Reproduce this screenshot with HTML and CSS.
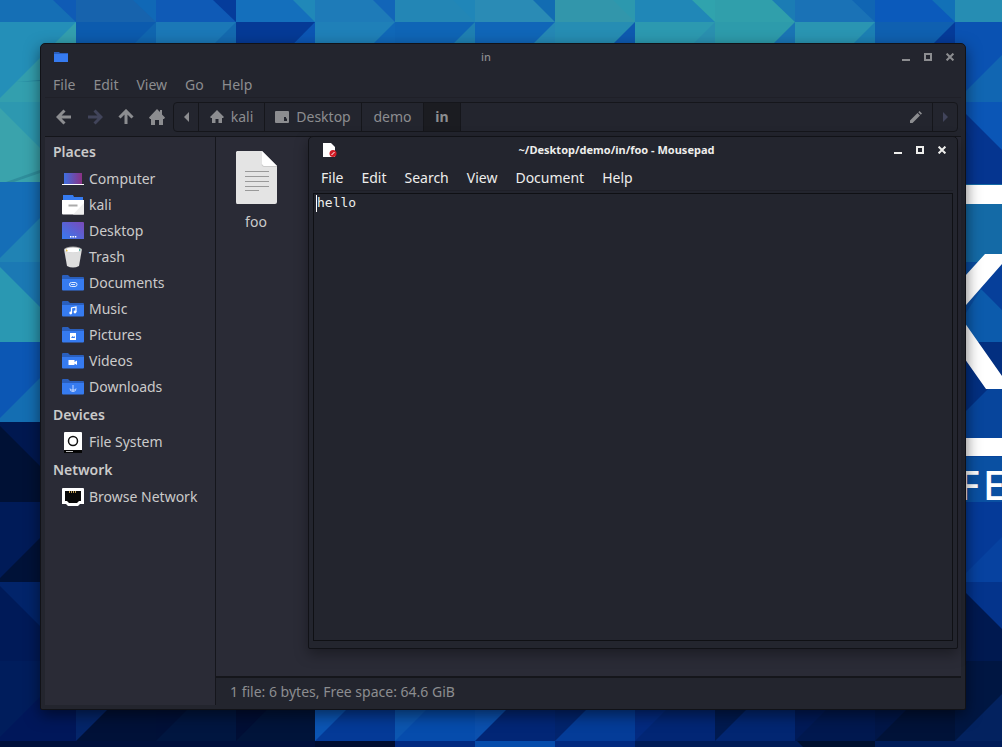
FILE: index.html
```
<!DOCTYPE html>
<html lang="en">
<head>
<meta charset="utf-8">
<title>Desktop</title>
<link rel="stylesheet" href="styles.css">
</head>
<body>
<svg width="0" height="0" class="defs" aria-hidden="true">
  <defs>
    <linearGradient id="screen" x1="0" y1="0" x2="1" y2="0"><stop offset="0" stop-color="#3f6fe0"/><stop offset="1" stop-color="#8c3184"/></linearGradient>
    <linearGradient id="desk" x1="0" y1="1" x2="1" y2="0"><stop offset="0" stop-color="#367bf0"/><stop offset="1" stop-color="#7b49b8"/></linearGradient>
    <symbol id="folder" viewBox="0 0 22 22"><path d="M0 4q0-1 1-1h5l2 2h13q1 0 1 1v5H0z" fill="#2a5fbd"/><path d="M0 7h22v10.500q0 1-1 1H1q-1 0-1-1z" fill="#367bf0"/></symbol>
    <symbol id="minimize" viewBox="0 0 8 8"><path d="M0 6h8v2H0z" fill="currentColor"/></symbol>
    <symbol id="maximize" viewBox="0 0 8 8"><path d="M1 1h6v6H1z" fill="none" stroke="currentColor" stroke-width="2"/></symbol>
    <symbol id="close" viewBox="0 0 8 8"><path d="M.6.6l6.800 6.800M7.400.6L.6 7.400" stroke="currentColor" stroke-width="2"/></symbol>
  </defs>
</svg>

<svg class="wallpaper" viewBox="0 0 1002 747" preserveAspectRatio="xMidYMid slice" aria-hidden="true">
  <rect width="1002" height="747" fill="#001d5c"/>
  <!-- top row -->
  <path fill="#156fb5" d="M0 0h76v22H0z"/><path fill="#0f5bb5" d="M53 0h23v22z"/>
  <path fill="#1763ad" d="M76 0h80v22H76z"/><path fill="#1068b6" d="M133 0h23v22z"/>
  <path fill="#0f5ab6" d="M156 0h80v22h-80z"/><path fill="#053c9b" d="M213 0h23v22z"/>
  <path fill="#146fbc" d="M236 0h79v22h-79z"/><path fill="#2088b8" d="M293 0h22v22z"/>
  <path fill="#1e7bb8" d="M315 0h80v22h-80z"/><path fill="#1265b8" d="M373 0h22v22z"/>
  <path fill="#2386b5" d="M395 0h80v22h-80z"/><path fill="#2086b8" d="M453 0h22v22z"/>
  <path fill="#2a8bb5" d="M475 0h80v22h-80z"/><path fill="#126cb2" d="M533 0h22v22z"/>
  <path fill="#3296ab" d="M555 0h80v22h-80z"/><path fill="#2c98ae" d="M613 0h22v22z"/>
  <path fill="#2087b7" d="M635 0h80v22h-80z"/><path fill="#30a3ad" d="M692 0h23v22z"/>
  <path fill="#309fab" d="M715 0h80v22h-80z"/><path fill="#1b7cb4" d="M772 0h23v22z"/>
  <path fill="#1a72b6" d="M795 0h80v22h-80z"/><path fill="#1065b3" d="M852 0h23v22z"/>
  <path fill="#0b5abb" d="M875 0h80v22h-80z"/><path fill="#1271b7" d="M932 0h23v22z"/>
  <path fill="#268db3" d="M955 0h47v22h-47z"/>
  <!-- second row -->
  <path fill="#248fb8" d="M0 22h76v80H0z"/><path fill="#339fae" d="M76 22v80H0v-4z"/>
  <path fill="#0c5bae" d="M76 22h80v80H76z"/><path fill="#1066b0" d="M156 22v80H76z"/>
  <path fill="#1b78b7" d="M156 22h80v80h-80z"/><path fill="#146ab0" d="M236 22v80h-80z"/>
  <path fill="#053a96" d="M236 22h79v80h-79z"/><path fill="#0c56b4" d="M315 22v80h-79z"/>
  <path fill="#1f80b8" d="M315 22h80v80h-80z"/><path fill="#1068b8" d="M395 22v80h-80z"/>
  <path fill="#0f65b6" d="M395 22h80v80h-80z"/><path fill="#1f80b2" d="M475 22v80h-80z"/>
  <path fill="#1066b8" d="M475 22h80v80h-80z"/><path fill="#2588b5" d="M555 22v80h-80z"/>
  <path fill="#268db3" d="M555 22h80v80h-80z"/><path fill="#0e5ab0" d="M635 22v80h-80z"/>
  <path fill="#2c99b0" d="M635 22h80v80h-80z"/><path fill="#2a90b0" d="M715 22v80h-80z"/>
  <path fill="#2d9bab" d="M715 22h80v80h-80z"/><path fill="#1a75b5" d="M795 22v80h-80z"/>
  <path fill="#2a95b2" d="M795 22h80v80h-80z"/><path fill="#1c80b4" d="M875 22v80h-80z"/>
  <path fill="#0f60b0" d="M875 22h80v80h-80z"/><path fill="#053b9a" d="M955 22v80h-80z"/>
  <path fill="#0a52b2" d="M955 22h47v80h-47z"/><path fill="#1166b2" d="M1002 55v47h-47z"/>
  <!-- left column -->
  <path fill="#2d98b0" d="M0 102h76v80H0z"/><path fill="#3aa3ac" d="M0 108l74 74H0z"/><path fill="#2f8e9c" d="M6 182l34-12v3l-26 9z"/><path fill="#2586a0" d="M16 82l24-2v1z"/>
  <path fill="#156eb7" d="M0 182h76v80H0z"/><path fill="#2083b4" d="M0 258l76-76v80H0z"/>
  <path fill="#1b79b4" d="M0 262h76v80H0z"/><path fill="#2a98b2" d="M0 267l75 75H0z"/>
  <path fill="#0c57b4" d="M0 342h76v80H0z"/><path fill="#146eb2" d="M0 418l76-76v80H0z"/>
  <path fill="#001850" d="M0 422h76v80H0z"/><path fill="#001135" d="M0 426l76 76H0z"/>
  <path fill="#001b58" d="M0 502h76v80H0z"/><path fill="#001238" d="M0 578l76-76v80H0z"/>
  <path fill="#02246a" d="M0 582h76v79H0z"/><path fill="#001a58" d="M0 586l75 75H0z"/>
  <path fill="#001d5c" d="M0 661h76v80H0z"/><path fill="#00175a" d="M0 737l76-76v80H0z"/>
  <!-- right column -->
  <path fill="#0b56b6" d="M955 102h47v82h-47z"/><path fill="#053590" d="M955 103l47 47v34h-47z"/>
  <path fill="#146aa6" d="M955 184h47v78h-47z"/><path fill="#0a4da0" d="M955 262h47v80h-47z"/>
  <path fill="#0c5bac" d="M955 330l27-42 20 22v32h-47z"/><path fill="#063f9a" d="M980 288l22-24v46z"/>
  <path fill="#032f80" d="M955 342h47v80h-47z"/><path fill="#07459c" d="M955 422l47-47v127h-47z"/>
  <path fill="#0a50a2" d="M955 457h47v45h-47z"/>
  <path fill="#053a98" d="M955 502h47v80h-47z"/><path fill="#0742a0" d="M1002 537v45h-45z"/>
  <path fill="#04348c" d="M955 582h47v79h-47z"/><path fill="#001950" d="M955 582l47 47v32h-47z"/>
  <path fill="#001642" d="M955 661h47v80h-47z"/><path fill="#03225f" d="M1002 694v47h-47z"/>
  <!-- emblem -->
  <path fill="#fff" d="M955 185h47v19h-47zM955 438h47v18h-47zM985 254h17v10l-36 41-11 12v-30zM955 309l47 67v13h-16l-31-44z"/>
  <text class="emblem-text" x="959" y="500">F</text><text class="emblem-text" x="983" y="500">E</text>
  <!-- bottom row -->
  <path fill="#04256a" d="M76 661h80v80H76z"/><path fill="#001138" d="M156 661v80H76z"/>
  <path fill="#001038" d="M156 661h80v80h-80z"/><path fill="#001640" d="M236 661v80h-80z"/>
  <path fill="#000e35" d="M236 661h79v80h-79z"/><path fill="#00143a" d="M315 661v80h-79z"/>
  <path fill="#0b55b4" d="M315 661h80v80h-80z"/><path fill="#043a97" d="M395 661v80h-80z"/>
  <path fill="#0c56b0" d="M395 661h80v80h-80z"/><path fill="#064cac" d="M475 661v80h-80z"/>
  <path fill="#0b50ae" d="M475 661h80v80h-80z"/><path fill="#022676" d="M555 661v80h-80z"/>
  <path fill="#02246e" d="M555 661h80v80h-80z"/><path fill="#043c98" d="M635 661v80h-80z"/>
  <path fill="#032a80" d="M635 661h80v80h-80z"/><path fill="#022675" d="M715 661v80h-80z"/>
  <path fill="#001a50" d="M715 661h80v80h-80z"/><path fill="#022672" d="M795 661v80h-80z"/>
  <path fill="#001a58" d="M795 661h80v80h-80z"/><path fill="#00184f" d="M875 661v80h-80z"/>
  <path fill="#001648" d="M875 661h80v80h-80z"/><path fill="#001238" d="M955 661v80h-80z"/>
  <path fill="#00103c" d="M0 741h315v6H0z"/><path fill="#000d30" d="M315 741h80v6h-80z"/><path fill="#022a80" d="M395 741h80v6h-80zM555 741h80v6h-80z"/>
  <path fill="#064cab" d="M475 741h80v6h-80z"/><path fill="#001c58" d="M635 741h367v6H635z"/><path fill="#001030" d="M797 741h78v6h-72z"/>
</svg>

<main>
<section class="window files" aria-label="File manager">
  <header class="titlebar">
    <svg class="title-icon" viewBox="0 0 14 14"><path d="M0 2h5l1 1h8v4H0z" fill="#2a5fbd"/><path d="M0 4h14v8H0z" fill="#367bf0"/></svg>
    <h1 class="title">in</h1>
    <button class="control" aria-label="Minimize"><svg><use href="#minimize"/></svg></button>
    <button class="control" aria-label="Maximize"><svg><use href="#maximize"/></svg></button>
    <button class="control" aria-label="Close"><svg><use href="#close"/></svg></button>
  </header>
  <nav class="menubar" aria-label="File manager menu">
    <button>File</button><button>Edit</button><button>View</button><button>Go</button><button>Help</button>
  </nav>
  <div class="toolbar">
    <button class="tool" aria-label="Back"><svg viewBox="0 0 16 16"><path d="M8.500 1.500L2 8l6.500 6.500M3 8h12" class="arrow"/></svg></button>
    <button class="tool disabled" aria-label="Forward" disabled><svg viewBox="0 0 16 16"><path d="M7.500 1.500L14 8l-6.500 6.500M13 8H1" class="arrow"/></svg></button>
    <button class="tool" aria-label="Up"><svg viewBox="0 0 16 16"><path d="M1.500 8.500L8 2l6.500 6.500M8 3v12" class="arrow"/></svg></button>
    <button class="tool" aria-label="Home"><svg viewBox="0 0 16 16"><path d="M8 0L0 8.500 1 10h1v6h4v-5h4v5h4v-6h1l1-1.500-3-3V1h-2v2z" fill="currentColor"/></svg></button>
    <div class="pathbar">
      <button class="segment narrow" aria-label="Scroll left"><svg class="tri" viewBox="0 0 5 10"><path d="M5 0v10L0 5z" fill="currentColor"/></svg></button>
      <button class="segment"><svg class="seg-icon" viewBox="0 0 14 14"><path d="M7 0L0 7l1 1h1v5h3.500V9h3v4H12V8h1l1-1z" fill="currentColor"/></svg>kali</button>
      <button class="segment wide"><svg class="seg-icon" viewBox="0 0 14 14"><path d="M1 1h12q1 0 1 1v10q0 1-1 1H1q-1 0-1-1V2q0-1 1-1zM9 7v4h3V8.500h-1V7z" fill="currentColor" fill-rule="evenodd"/></svg>Desktop</button>
      <button class="segment plain">demo</button>
      <button class="segment current">in</button>
      <button class="edit" aria-label="Edit path"><svg viewBox="0 0 12 12"><path d="M0 9.500L7.500 2 10 4.500 2.500 12H0zM8.300 1.200L9.500 0 12 2.500l-1.200 1.200z" fill="currentColor"/></svg></button>
      <button class="segment narrow disabled last" aria-label="Scroll right" disabled><svg class="tri" viewBox="0 0 5 10"><path d="M0 0v10l5-5z" fill="currentColor"/></svg></button>
    </div>
  </div>
  <div class="body">
    <aside class="sidebar">
      <h2>Places</h2>
      <ul>
        <li><svg viewBox="0 0 22 22"><path d="M2 5h18v11H2z" fill="url(#screen)"/><path d="M0 16h22v1H0z" fill="#fff"/></svg>Computer</li>
        <li><svg viewBox="0 0 22 22"><path d="M1 1h10l1 2h9v4H1z" fill="#367bf0"/><path d="M0 6h22v13.500q0 1-1 1H1q-1 0-1-1z" fill="#fff"/><path d="M22 9v11.500H11z" fill="#eee"/><path d="M6.500 11.500h9" stroke="#aaa" stroke-width="2"/></svg>kali</li>
        <li><svg viewBox="0 0 22 22"><path d="M0 3q0-1 1-1h20q1 0 1 1v16H0z" fill="url(#desk)"/><path d="M8 16h1.500v1.500H8zM10.400 16h1.500v1.500h-1.500zM12.800 16h1.500v1.500h-1.500z" fill="#fff"/></svg>Desktop</li>
        <li><svg viewBox="0 0 22 22"><path d="M2 3l3 17q6 3 12 0l3-17z" fill="#dedede"/><ellipse cx="11" cy="3.500" rx="9" ry="3" fill="#aaa"/><ellipse cx="11" cy="4" rx="8" ry="2.500" fill="#fff"/><path d="M4 3l2 2-2 .5z" fill="#e5c44d"/><path d="M17 3l2 1-2 1z" fill="#2a9c8c"/></svg>Trash</li>
        <li><svg viewBox="0 0 22 22"><use href="#folder"/><path d="M13 10.500H9.500a2 2 0 000 4H13a2 2 0 000-4M9 12.500h4" fill="none" stroke="#dce8ff"/></svg>Documents</li>
        <li><svg viewBox="0 0 22 22"><use href="#folder"/><path d="M9.500 15v-5l4.500-1v5" fill="none" stroke="#fff" stroke-width="1.200"/><circle cx="8.700" cy="15" r="1.400" fill="#fff"/><circle cx="13" cy="14" r="1.400" fill="#fff"/></svg>Music</li>
        <li><svg viewBox="0 0 22 22"><use href="#folder"/><path d="M8 9h6v7H8z" fill="#fff"/><path d="M9 14l1.500-2 1 1 1-1 .5 2z" fill="#367bf0"/></svg>Pictures</li>
        <li><svg viewBox="0 0 22 22"><use href="#folder"/><path d="M6.500 10h6v2l2.500-1.500v4.500l-2.500-1.500V15h-6z" fill="#fff"/></svg>Videos</li>
        <li><svg viewBox="0 0 22 22"><use href="#folder"/><path d="M11 9v6M8 12.500q0 3 3 3t3-3M9.500 13l1.500 1.500 1.500-1.500" fill="none" stroke="#c5d9ff"/></svg>Downloads</li>
      </ul>
      <h2>Devices</h2>
      <ul><li><svg viewBox="0 0 22 22"><path d="M2 18h18v4H2z" fill="#050505"/><path d="M3 1h16q1 0 1 1v17H2V2q0-1 1-1z" fill="#fff"/><circle cx="11" cy="10" r="4.500" fill="none" stroke="#111" stroke-width="1.500"/><path d="M4 20.500h7" stroke="#bbb"/></svg>File System</li></ul>
      <h2>Network</h2>
      <ul><li><svg viewBox="0 0 22 22"><path d="M1 2h20q1 0 1 1v15h-4l-2 2H6l-2-2H0V3q0-1 1-1z" fill="#fff"/><path d="M3 5h16v10h-2l-2 2H7l-2-2H3z" fill="#080808"/><path d="M7.500 5v2M9.500 5v2M11.500 5v2M13.500 5v2" stroke="#bb9a55"/></svg>Browse Network</li></ul>
    </aside>
    <div class="pane">
      <div class="view">
        <figure class="file">
          <svg viewBox="0 0 43 55"><path d="M2 1h25l15 15v36q0 2-2 2H2q-1 0-1-2V2z" fill="#e4e4e4"/><path d="M27 1l15 15H29q-2 0-2-2z" fill="#fff"/><path d="M27 14.500q0 2 2 2h13" fill="none" stroke="#ccc"/><path d="M10 21.500h24M10 26.500h24M10 31.500h24M10 36.500h24M10 40.500h14" stroke="#999"/></svg>
          <figcaption>foo</figcaption>
        </figure>
      </div>
      <footer class="status">1 file: 6 bytes, Free space: 64.6 GiB</footer>
    </div>
  </div>
</section>

<section class="window mousepad" aria-label="Mousepad">
  <header class="titlebar">
    <svg class="title-icon" viewBox="0 0 14 14"><path d="M0 0h8l4 4v10H0z" fill="#fff"/><circle cx="10" cy="10.500" r="3.500" fill="#d01c26"/><path d="M8.500 12l3-3" stroke="#fff"/></svg>
    <h1 class="title">~/Desktop/demo/in/foo - Mousepad</h1>
    <button class="control" aria-label="Minimize"><svg><use href="#minimize"/></svg></button>
    <button class="control" aria-label="Maximize"><svg><use href="#maximize"/></svg></button>
    <button class="control" aria-label="Close"><svg><use href="#close"/></svg></button>
  </header>
  <nav class="menubar" aria-label="Mousepad menu">
    <button>File</button><button>Edit</button><button>Search</button><button>View</button><button>Document</button><button>Help</button>
  </nav>
  <div class="editor">
    <textarea aria-label="Document text" spellcheck="false">hello</textarea>
    <span class="caret"></span>
  </div>
</section>
</main>
</body>
</html>
```
FILE: styles.css
```
* { box-sizing: border-box; }
html, body { height: 100%; }
body {
  margin: 0;
  position: relative;
  overflow: hidden;
  font: 14px/20px "Noto Sans", sans-serif;
  background: #001d5c;
}
svg { display: block; }
h1, h2, ul, figure { margin: 0; padding: 0; }
ul { list-style: none; }
button {
  margin: 0;
  padding: 0;
  border: 0;
  background: none;
  color: inherit;
  font: inherit;
}
.defs { position: absolute; }
.wallpaper { position: absolute; inset: 0; width: 100%; height: 100%; }
.emblem-text { font: 500 39px "Noto Sans", sans-serif; fill: #fff; }

.window {
  position: absolute;
  display: flex;
  flex-direction: column;
  border: 1px solid #111217;
  border-radius: 5px 5px 2px 2px;
  background: #23252e;
}
.files {
  inset: 43px 36px 37px 40px;
  padding: 0 4px 4px;
  color: #8c8d90;
  box-shadow: 0 5px 15px rgba(0, 0, 0, .5);
}
.mousepad {
  inset: 136px 44px 98px 308px;
  padding: 0 4px 7px;
  color: #eeeeec;
  box-shadow: 0 5px 14px rgba(0, 0, 0, .35);
}

.titlebar { display: flex; align-items: center; height: 26px; padding-left: 9px; }
.title-icon { width: 14px; height: 14px; margin-right: 9px; }
.title { flex: 1; font-size: 11px; font-weight: 700; line-height: 20px; text-align: center; }
.files .title { font-weight: 500; }
.control { display: grid; place-items: center; width: 22px; height: 22px; }
.control svg { width: 8px; height: 8px; }
.mousepad .titlebar { padding-left: 10px; }

.menubar {
  display: flex;
  gap: 18px;
  padding: 5px 8px 2px;
  border-bottom: 1px solid #1f2028;
}

.toolbar {
  display: flex;
  align-items: center;
  height: 38px;
  padding: 0 3px;
}
.tool { display: grid; place-items: center; width: 31px; height: 29px; }
.tool svg { width: 16px; height: 16px; }
.arrow { fill: none; stroke: currentColor; stroke-width: 3; }
.disabled { color: #41445a; }
.pathbar {
  display: flex;
  flex: 1;
  height: 30px;
  margin-left: 1px;
  border: 1px solid #15161b;
  border-radius: 4px;
}
.segment {
  display: flex;
  align-items: center;
  justify-content: center;
  gap: 7px;
  min-width: 66px;
  border-right: 1px solid #15161b;
}
.narrow { min-width: 25px; }
.wide { min-width: 97px; }
.plain { min-width: 62px; }
.current { min-width: 37px; background: #1b1c21; font-weight: 700; }
.last { border-right: 0; border-left: 1px solid #15161b; }
.seg-icon { width: 14px; height: 14px; }
.tri { width: 5px; height: 10px; }
.edit { display: grid; place-items: center; width: 32px; margin-left: auto; }
.edit svg { width: 12px; height: 12px; }

.body {
  display: flex;
  flex: 1;
  min-height: 0;
  border-top: 1px solid #14151a;
}
.sidebar {
  width: 171px;
  background: #2a2b36;
  border-right: 1px solid #15161c;
  color: #cacaca;
}
.sidebar h2 { padding: 0 8px; font-size: 14px; line-height: 29px; font-weight: 600; }
.sidebar li { display: flex; align-items: center; gap: 5px; height: 26px; padding-left: 17px; }
.sidebar li svg { width: 22px; height: 22px; }
.pane { display: flex; flex: 1; flex-direction: column; }
.view { flex: 1; padding-top: 13px; background: #2a2b36; }
.file { width: 80px; color: #cacaca; text-align: center; }
.file svg { width: 43px; height: 55px; margin: 0 auto 7px; }
.status {
  height: 29px;
  padding: 4px 14px;
  border-top: 2px solid #15161b;
}

.editor {
  position: relative;
  flex: 1;
  margin-top: 2px;
  border: 1px solid #0f1014;
}
.editor textarea {
  display: block;
  width: 100%;
  height: 100%;
  padding: 0 3px;
  border: 0;
  outline: 0;
  resize: none;
  background: transparent;
  color: #eeeeec;
  font: 13px/18px "DejaVu Sans Mono", monospace;
}
.caret { position: absolute; left: 2px; top: 1px; width: 1px; height: 17px; background: #fff; }
```
